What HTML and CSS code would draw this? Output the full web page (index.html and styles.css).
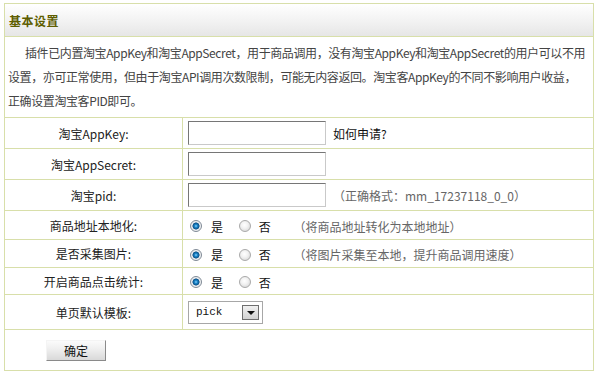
FILE: index.html
```html
<!DOCTYPE html>
<html lang="zh-CN">
<head>
<meta charset="utf-8">
<title>基本设置</title>
<link rel="stylesheet" href="styles.css">
</head>
<body>
<div class="panel">
  <div class="panel-head"><h2 class="panel-title">基本设置</h2></div>
  <p class="intro">插件已内置淘宝AppKey和淘宝AppSecret，用于商品调用，没有淘宝AppKey和淘宝AppSecret的用户可以不用设置，亦可正常使用，但由于淘宝API调用次数限制，可能无内容返回。淘宝客AppKey的不同不影响用户收益，<br>正确设置淘宝客PID即可。</p>
  <table class="form">
    <tr class="row-a">
      <th>淘宝AppKey:</th>
      <td><input class="text" type="text"><a class="help" href="#">如何申请?</a></td>
    </tr>
    <tr class="row-a">
      <th>淘宝AppSecret:</th>
      <td><input class="text" type="text"></td>
    </tr>
    <tr class="row-a">
      <th>淘宝pid:</th>
      <td><input class="text" type="text"><span class="note note-pid">（正确格式：mm_17237118_0_0）</span></td>
    </tr>
    <tr class="row-b">
      <th>商品地址本地化:</th>
      <td>
        <label class="opt"><input class="radio" type="radio" name="local" checked><span class="opt-text">是</span></label>
        <label class="opt"><input class="radio" type="radio" name="local"><span class="opt-text">否</span></label>
        <span class="note">（将商品地址转化为本地地址）</span>
      </td>
    </tr>
    <tr class="row-c">
      <th>是否采集图片:</th>
      <td>
        <label class="opt"><input class="radio" type="radio" name="img" checked><span class="opt-text">是</span></label>
        <label class="opt"><input class="radio" type="radio" name="img"><span class="opt-text">否</span></label>
        <span class="note">（将图片采集至本地，提升商品调用速度）</span>
      </td>
    </tr>
    <tr class="row-d">
      <th>开启商品点击统计:</th>
      <td>
        <label class="opt"><input class="radio" type="radio" name="stat" checked><span class="opt-text">是</span></label>
        <label class="opt"><input class="radio" type="radio" name="stat"><span class="opt-text">否</span></label>
      </td>
    </tr>
    <tr class="row-e">
      <th>单页默认模板:</th>
      <td>
        <span class="select-wrap">
          <select class="select"><option>pick</option></select>
          <span class="select-btn"><span class="select-arrow"></span></span>
        </span>
      </td>
    </tr>
    <tr class="row-f">
      <td colspan="2" class="actions"><button class="btn" type="button">确定</button></td>
    </tr>
  </table>
</div>
</body>
</html>
```

FILE: styles.css
```css
html, body {
  margin: 0;
  padding: 0;
  background: #fff;
}
body {
  font-family: "Noto Sans CJK SC", "Liberation Sans", sans-serif;
  font-size: 12px;
  color: #222;
}
.panel {
  width: 588px;
  margin: 3px 0 0 4px;
  border: 1px solid #d8dfaa;
}
.panel-head {
  height: 32px;
  display: flex;
  align-items: center;
  padding-left: 4px;
  border-bottom: 1px solid #d8dfaa;
  background: linear-gradient(#ffffff, #f3f3f3 50%, #e6e6e6);
}
.panel-title {
  margin: 0;
  font-size: 12px;
  font-weight: bold;
  letter-spacing: 0.5px;
  color: #5e5e00;
}
.intro {
  margin: 0;
  padding: 4px 4px 4px 3px;
  line-height: 24px;
  text-indent: 17px;
  letter-spacing: -0.4px;
  color: #444;
}
.form {
  width: 588px;
  border-collapse: separate;
  border-spacing: 0;
}
.form th,
.form td {
  box-sizing: border-box;
  padding: 0;
  border-top: 1px solid #d8dfaa;
  vertical-align: middle;
}
.form th {
  width: 178px;
  border-right: 1px solid #d8dfaa;
  font-weight: normal;
  text-align: center;
  color: #222;
}
.form td {
  padding-left: 5px;
  white-space: nowrap;
}
.row-a th, .row-a td { height: 31px; }
.row-b th, .row-b td { height: 29px; }
.row-c th, .row-c td { height: 28px; }
.row-d th, .row-d td { height: 27px; }
.row-e th, .row-e td { height: 35px; }
.row-f td { height: 41px; }

.text {
  box-sizing: border-box;
  width: 138px;
  height: 24px;
  margin: 0;
  padding: 2px 3px;
  vertical-align: middle;
  border: 1px solid;
  border-color: #767676 #c9c9c9 #c9c9c9 #767676;
  background: #fff;
  font: 12px "Noto Sans CJK SC", sans-serif;
}
.help {
  margin-left: 7px;
  color: #111;
  text-decoration: none;
  vertical-align: middle;
}
.note {
  margin-left: 20px;
  color: #666;
  vertical-align: middle;
}
.note-pid {
  margin-left: 7px;
}

.opt {
  display: inline-flex;
  align-items: center;
  vertical-align: middle;
}
.opt + .opt .radio {
  margin-left: 13px;
}
.radio {
  appearance: none;
  -webkit-appearance: none;
  box-sizing: border-box;
  width: 12px;
  height: 12px;
  margin: 0 0 0 2px;
  border-radius: 50%;
  border: 1px solid #a9a9a9;
  background: radial-gradient(circle at 45% 40%, #ffffff 0, #f2f2f2 40%, #cfcfcf 100%);
}
.radio:checked {
  border-color: #7f8a96;
  background: radial-gradient(circle at 50% 50%, #8fd3ff 0, #1b86c8 1.5px, #0b4f86 3.2px, #dfe3e8 3.8px, #f6f6f6 5px, #cfd3d8 6px);
}
.opt-text {
  margin-left: 9px;
  color: #111;
}
.opt + .opt .opt-text {
  margin-left: 8px;
}

.select-wrap {
  position: relative;
  display: inline-block;
  vertical-align: middle;
  margin-left: 0;
}
.select {
  appearance: none;
  -webkit-appearance: none;
  box-sizing: border-box;
  display: block;
  width: 75px;
  height: 23px;
  margin: 0;
  padding: 0 0 0 7px;
  border: 1px solid #a7a7a7;
  border-radius: 0;
  background: #fff;
  color: #111;
  font: 11px "Liberation Mono", monospace;
}
.select-btn {
  position: absolute;
  left: 54px;
  top: 4px;
  box-sizing: border-box;
  width: 17px;
  height: 15px;
  border: 1px solid #6e6e6e;
  background: linear-gradient(#f0f0f0, #d2d2d2);
  display: flex;
  align-items: center;
  justify-content: center;
}
.select-arrow {
  width: 0;
  height: 0;
  margin-top: 2px;
  border-left: 4px solid transparent;
  border-right: 4px solid transparent;
  border-top: 4px solid #111;
}

.actions {
  padding-left: 41px !important;
}
.btn {
  box-sizing: border-box;
  width: 60px;
  height: 21px;
  margin: 0;
  padding: 0;
  border: 1px solid;
  border-color: #f4f4f4 #8a8a8a #8a8a8a #f4f4f4;
  background: linear-gradient(#fbfbfb, #ececec 50%, #d9d9d9);
  color: #111;
  font: 12px "Noto Sans CJK SC", sans-serif;
  vertical-align: middle;
}
```
